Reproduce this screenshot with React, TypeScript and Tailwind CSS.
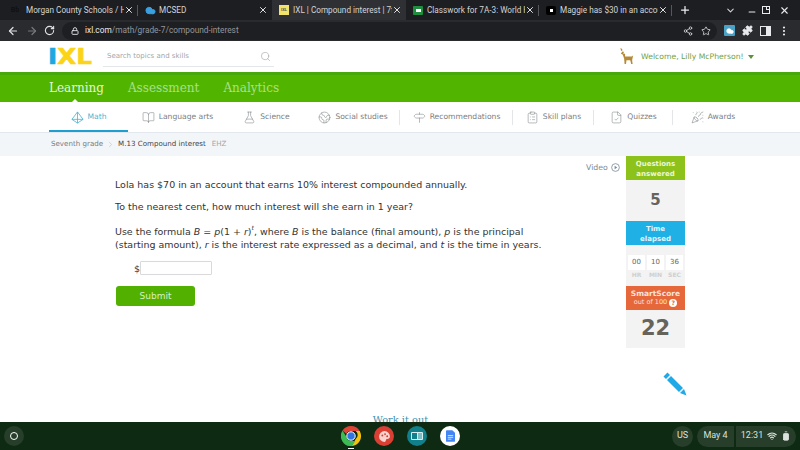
import React from "react";
import { ArrowLeft, ArrowRight, RotateCw, Lock, Share2, Star, Puzzle, EllipsisVertical, X, Plus, ChevronDown, Minus, Search, BookOpen, FlaskConical, Earth, Signpost, ClipboardList, PartyPopper, FileCheck, ChevronRight, Wifi, BatteryFull, Cloud } from "lucide-react";

const sans = "font-['Roboto','Noto_Sans',sans-serif]";
const verdana = "font-['DejaVu_Sans',sans-serif]";

function Tab({ w, icon, title, active, divider, textGap }: { w: string; icon: React.ReactNode; title: string; active?: boolean; divider?: boolean; textGap: string }) {
  return (
    <div className={`${w} relative flex h-full shrink-0 items-center pl-[5px] pr-[4px] ${active ? "bg-[#2f3033]" : ""}`}>
      <span className="flex w-[14px] shrink-0 justify-center">{icon}</span>
      <span className={`${textGap} min-w-0 flex-1 overflow-hidden whitespace-nowrap pr-[4px] text-[8.2px] leading-[12px] text-[#d3d4d6]`}>{title}</span>
      <X size={10} strokeWidth={2.4} className="shrink-0 text-[#dfe1e5]" />
      {divider && <span className="absolute right-0 top-[5px] h-[11px] w-px bg-[#55575b]" />}
    </div>
  );
}

function NavItem({ w, icon, label, active, divider }: { w: string; icon: React.ReactNode; label: string; active?: boolean; divider?: boolean }) {
  return (
    <div className={`${w} relative flex h-full shrink-0 items-center justify-center gap-[4px] text-[7.6px] ${active ? "text-[#4fb4d0]" : "text-[#7b8083]"}`}>
      {icon}
      <span>{label}</span>
      {active && <span className="absolute inset-x-0 bottom-0 h-[2px] bg-[#1f9fd0]" />}
      {divider && <span className="absolute right-0 top-[8px] h-[15px] w-px bg-[#e3e5e7]" />}
    </div>
  );
}

function TimeBox({ v, l }: { v: string; l: string }) {
  return (
    <div className="flex w-[17px] flex-col items-center">
      <div className="flex h-[15px] w-full items-center justify-center bg-white text-[7px] text-[#666]">{v}</div>
      <div className="mt-[1px] text-[6px] font-bold leading-[8px] text-[#cfcfcf]">{l}</div>
    </div>
  );
}

export default function App() {
  return (
    <div className="flex h-[450px] w-[800px] flex-col overflow-hidden bg-white">
      {/* tab strip */}
      <div className={`flex h-[20px] shrink-0 items-center bg-[#1d1e21] ${sans}`}>
        <Tab w="w-[138px]" textGap="ml-[7px]" title="Morgan County Schools / Hon" divider icon={<span className="pl-[6px] text-[7px] font-bold text-[#111]">Bb</span>} />
        <Tab w="w-[134px]" textGap="ml-[2px]" title="MCSED" icon={<Cloud size={11} fill="#3aa0e0" className="text-[#3aa0e0]" />} />
        <Tab w="w-[134px]" textGap="ml-[2px]" title="IXL | Compound interest | 7th" active icon={<span className="flex h-[10px] w-[10px] items-center justify-center bg-[#f3e36b] text-[4px] font-bold text-[#555]">IXL</span>} />
        <Tab w="w-[133px]" textGap="ml-[2px]" title="Classwork for 7A-3: World Hist" divider icon={<span className="flex h-[9px] w-[10px] items-center justify-center rounded-[1px] bg-[#1e8e3e]"><span className="h-[3px] w-[5px] bg-white" /></span>} />
        <Tab w="w-[133px]" textGap="ml-[2px]" title="Maggie has $30 in an account" divider icon={<span className="flex h-[9px] w-[10px] items-center justify-center rounded-[2px] bg-black"><span className="h-[3px] w-[3px] bg-white" /></span>} />
        <Plus size={12} strokeWidth={2.5} className="ml-[7px] text-[#eceef1]" />
        <ChevronDown size={11} strokeWidth={2.2} className="ml-[34px] text-[#d5d7da]" />
        <Minus size={10} strokeWidth={2.5} className="ml-[11px] mt-[3px] text-[#e8eaed]" />
        <span className="relative ml-[5px] h-[8px] w-[8px] border border-[#e8eaed]"><span className="absolute -right-[1px] -top-[1px] h-[4px] w-[4px] border border-[#e8eaed] bg-[#1d1e21]" /></span>
        <X size={11} strokeWidth={2.4} className="ml-[9px] text-[#e8eaed]" />
      </div>
      {/* toolbar */}
      <div className={`flex h-[21px] shrink-0 items-center bg-[#2a2b2e] pl-[7px] ${sans}`}>
        <ArrowLeft size={12} strokeWidth={2.4} className="text-[#e0e2e5]" />
        <ArrowRight size={12} strokeWidth={2.4} className="ml-[7px] text-[#77797d]" />
        <RotateCw size={11} strokeWidth={2.4} className="ml-[6px] text-[#e0e2e5]" />
        <div className="ml-[7px] flex h-[18px] w-[655px] items-center rounded-full bg-[#1e1f22] pl-[9px]">
          <Lock size={8} strokeWidth={3} className="text-[#d5d7da]" />
          <span className="ml-[6px] text-[8.3px] leading-none text-[#e8eaed]">ixl.com</span>
          <span className="text-[8.3px] leading-none text-[#93969b]">/math/grade-7/compound-interest</span>
          <Share2 size={10} strokeWidth={2} className="ml-auto text-[#d5d7da]" />
          <Star size={10} strokeWidth={2} className="ml-[8px] mr-[6px] text-[#d5d7da]" />
        </div>
        <span className="ml-[7px] flex h-[11px] w-[11px] items-center justify-center rounded-[1px] bg-[#4aa3c7]"><Cloud size={8} fill="#fff" className="text-white" /></span>
        <Puzzle size={11} fill="#e8eaed" className="ml-[7px] text-[#e8eaed]" />
        <span className="ml-[7px] flex h-[10px] w-[11px] justify-end border-[1.5px] border-[#e8eaed]"><span className="w-[4px] bg-[#e8eaed]" /></span>
        <EllipsisVertical size={12} strokeWidth={2.4} className="ml-[7px] text-[#e8eaed]" />
      </div>
      {/* IXL header */}
      <div className={`flex h-[31px] shrink-0 items-center bg-white pl-[48px] ${verdana}`}>
        <div className="flex w-[47px] origin-left scale-x-[1.12] items-baseline text-[22px] font-bold leading-none [-webkit-text-stroke:0.6px_currentColor]">
          <span className="text-[#1ea7e1]">I</span>
          <span className="text-[#fbd416]">XL</span>
        </div>
        <div className="ml-[8px] flex h-[21px] w-[171px] items-center border-b border-[#e4e7ea] pl-[4px] pr-[3px]">
          <span className="text-[7px] text-[#a3a6a8]">Search topics and skills</span>
          <Search size={11} strokeWidth={1.4} className="ml-auto text-[#a5a7a9]" />
        </div>
        <svg viewBox="0 0 16 18" className="ml-[344px] h-[17px] w-[16px]">
          <path d="M1 0 3 3 2 0 4 1 4 4 6 4 5 6 7 6 7 9H14L15.500 8 14.500 13 15 17H13.500L12.500 13H8.500L8 17H6.500L6 11 4.500 7 2.500 6 4 4Z" fill="#b5893a" />
        </svg>
        <span className="ml-[7px] text-[7.7px] text-[#6f9f45]">Welcome, Lilly McPherson!</span>
        <span className="ml-[4px] h-0 w-0 border-x-[3px] border-t-[4px] border-x-transparent border-t-[#5f8f3c]" />
      </div>
      {/* green bar */}
      <div className="flex h-[30px] shrink-0 items-center gap-[24px] border-t-[3px] border-[#46a80a] bg-[#51b500] pl-[49px] pb-[1px] font-['DejaVu_Serif',serif] text-[12px] text-[#a9e08a]">
        <div className="relative text-[#e6f5d8]">
          Learning
          <span className="absolute -bottom-[6px] left-[22px] h-0 w-0 border-x-[4px] border-b-[4px] border-x-transparent border-b-white" />
        </div>
        <div>Assessment</div>
        <div>Analytics</div>
      </div>
      {/* subnav */}
      <div className={`flex h-[30px] shrink-0 bg-white pl-[49px] ${verdana}`}>
        <NavItem w="w-[79px]" active label="Math" icon={<svg viewBox="0 0 14 14" className="h-[13px] w-[13px]" fill="none" stroke="#4fb4d0" strokeWidth="0.9"><path d="M7 1 1 9 7 13 13 9ZM7 1V13M1 9H13" /></svg>} />
        <NavItem w="w-[99px]" label="Language arts" icon={<BookOpen size={13} strokeWidth={1} />} />
        <NavItem w="w-[79px]" label="Science" icon={<FlaskConical size={13} strokeWidth={1} />} />
        <NavItem w="w-[94px]" divider label="Social studies" icon={<Earth size={13} strokeWidth={1} />} />
        <NavItem w="w-[113px]" divider label="Recommendations" icon={<Signpost size={13} strokeWidth={1} />} />
        <NavItem w="w-[81px]" divider label="Skill plans" icon={<ClipboardList size={13} strokeWidth={1} />} />
        <NavItem w="w-[79px]" divider label="Quizzes" icon={<FileCheck size={13} strokeWidth={1} />} />
        <NavItem w="w-[80px]" label="Awards" icon={<PartyPopper size={13} strokeWidth={1} />} />
      </div>
      {/* breadcrumb */}
      <div className={`flex h-[24px] shrink-0 items-center border-t border-[#e3e8ee] bg-[#f3f6f9] pl-[51px] text-[7.1px] ${verdana}`}>
        <span className="text-[#767b80]">Seventh grade</span>
        <ChevronRight size={9} strokeWidth={1} className="mx-[3px] text-[#9aa0a5]" />
        <span className="text-[#3e4347]">M.13 Compound interest</span>
        <span className="ml-[6px] text-[#a0a5a9]">EHZ</span>
      </div>
      {/* content */}
      <div className={`relative flex min-h-0 flex-1 flex-col overflow-hidden bg-white ${verdana}`}>
        <div className="flex h-[252px] shrink-0 pl-[115px]">
          <div className="w-[471px] pt-[22px] text-[9.47px] leading-[13px] text-[#333]">
            <p>Lola has $70 in an account that earns 10% interest compounded annually.</p>
            <p className="mt-[9px]">To the nearest cent, how much interest will she earn in 1 year?</p>
            <p className="mt-[12px]">
              Use the formula <i>B</i> = <i>p</i>(1 + <i>r</i>)<sup className="top-[-5px] text-[6px] leading-none"><i>t</i></sup>, where <i>B</i> is the balance (final amount), <i>p</i> is the principal
              <br />(starting amount), <i>r</i> is the interest rate expressed as a decimal, and <i>t</i> is the time in years.
            </p>
            <div className="mt-[10px] flex items-center pl-[19px]">
              <span>$</span>
              <div className="h-[14px] w-[72px] rounded-[1px] border border-[#d9d9d9] bg-white" />
            </div>
            <div className="ml-[1px] mt-[11px] flex h-[20px] w-[79px] items-center justify-center rounded-[3px] bg-[#51b000] text-[9px] text-[#d8f0c4]">Submit</div>
          </div>
          <div className="flex w-[40px] items-start pt-[6px] text-[7.8px] text-[#7c8b96]">
            <span>Video</span>
            <svg viewBox="0 0 10 10" className="ml-[3px] mt-[1px] h-[9px] w-[9px]" fill="none" stroke="#7c8b96"><circle cx="5" cy="5" r="4.3" strokeWidth="0.9" /><path d="M4 3 7 5 4 7Z" fill="#7c8b96" stroke="none" /></svg>
          </div>
          <div className="flex h-[192px] w-[59px] shrink-0 flex-col bg-[#f3f3f3] text-center">
            <div className="flex h-[24px] items-center justify-center bg-[#8cc21a] pt-[1px] text-[7px] font-bold leading-[10px] text-[#eef7d6]">Questions<br />answered</div>
            <div className="flex h-[41px] items-center justify-center text-[15px] font-bold text-[#66635c]">5</div>
            <div className="flex h-[24px] items-center justify-center bg-[#1fb0e6] pt-[1px] text-[7px] font-bold leading-[10px] text-[#e2f5fc]">Time<br />elapsed</div>
            <div className="flex h-[41px] justify-center gap-[2px] pt-[10px]">
              <TimeBox v="00" l="HR" />
              <TimeBox v="10" l="MIN" />
              <TimeBox v="36" l="SEC" />
            </div>
            <div className="flex h-[24px] flex-col items-center justify-center bg-[#e5673a] leading-[9px] text-[#fbe3da]">
              <span className="text-[7.5px] font-bold">SmartScore</span>
              <span className="flex items-center text-[6.5px]">out of 100<span className="ml-[2px] flex h-[8px] w-[8px] items-center justify-center rounded-full bg-white text-[6px] font-bold text-[#e5673a]">?</span></span>
            </div>
            <div className="flex h-[38px] items-center justify-center text-[21px] font-bold text-[#66635c]">22</div>
          </div>
        </div>
        <div className="mt-[5px] pl-[1px] text-center font-['DejaVu_Serif',serif] text-[9.800px] text-[#3d8fb0]">Work it out</div>
        <svg viewBox="0 0 24 24" className="absolute left-[663px] top-[216px] h-[24px] w-[24px]">
          <path d="M0.5 4.500 4.500 0.500 7 3 3 7Z M4 8 8 4 20 16 16 20Z M17 21 21 17 23.500 23.500Z" fill="#1fa9e6" />
        </svg>
      </div>
      {/* shelf */}
      <div className={`flex h-[28px] shrink-0 items-center bg-[#0e2a12] pl-[4px] pr-[4px] ${sans}`}>
        <span className="flex h-[20px] w-[20px] items-center justify-center rounded-full bg-[#263e2a]"><span className="h-[8px] w-[8px] rounded-full border border-white" /></span>
        <div className="ml-[317px] flex items-center gap-[13px]">
          <div className="relative">
            <svg viewBox="0 0 20 20" className="h-[20px] w-[20px]">
              <path d="M10 0a10 10 0 0 1 8.700 5H10a5 5 0 0 0-4.600 3L1.500 4.600A10 10 0 0 1 10 0Z" fill="#db4437" />
              <path d="M18.700 5a10 10 0 0 1-8 15l4-7a5 5 0 0 0 0-8Z" fill="#f4c20d" />
              <path d="M10.700 20A10 10 0 0 1 1.500 4.600l4 6.500a5 5 0 0 0 5 3.900h4Z" fill="#3cba54" />
              <circle cx="10" cy="10" r="4.200" fill="#2f74e0" stroke="#fff" strokeWidth="1" />
            </svg>
            <span className="absolute -bottom-[3px] left-[7px] h-[1px] w-[6px] bg-white" />
          </div>
          <span className="flex h-[20px] w-[20px] items-center justify-center rounded-full bg-[#d93f33]">
            <svg viewBox="0 0 12 12" className="h-[13px] w-[13px]"><path d="M6 1a5 5 0 0 0 0 10c1.500 0 1-1.500 1.500-2.200S11 8.500 11 6A5 5 0 0 0 6 1Z" fill="#f6d5d0" /><circle cx="4" cy="5" r="0.900" fill="#d93f33" /><circle cx="6.500" cy="3.800" r="0.900" fill="#d93f33" /><circle cx="8.500" cy="5.800" r="0.900" fill="#d93f33" /></svg>
          </span>
          <span className="flex h-[20px] w-[20px] items-center justify-center rounded-full bg-[#12808a]">
            <span className="flex h-[8px] w-[12px] items-center gap-[1px] rounded-[1px] bg-[#d8eef0] p-[1px]"><span className="h-full w-[5px] bg-[#12808a]" /><span className="h-full w-[4px] bg-[#7cbdc4]" /></span>
          </span>
          <span className="flex h-[20px] w-[20px] items-center justify-center rounded-full bg-white">
            <svg viewBox="0 0 10 13" className="h-[12px] w-[9px]"><path d="M1 0H7L10 3V12A1 1 0 0 1 9 13H1A1 1 0 0 1 0 12V1A1 1 0 0 1 1 0Z" fill="#4285f4" /><path d="M2 6H8M2 8H8M2 10H6" stroke="#fff" strokeWidth="0.800" /></svg>
          </span>
        </div>
        <div className="ml-auto flex items-center text-[9px] text-[#dbe2dc]">
          <span className="flex h-[21px] w-[21px] items-center justify-center rounded-full bg-[#263e2a]">US</span>
          <span className="ml-[4px] flex h-[21px] w-[37px] items-center justify-center rounded-l-full rounded-r-[3px] bg-[#263e2a]">May 4</span>
          <span className="ml-[2px] flex h-[21px] w-[60px] items-center justify-center gap-[4px] rounded-l-[3px] rounded-r-full bg-[#263e2a]">
            12:31
            <Wifi size={10} strokeWidth={3} />
            <BatteryFull size={10} fill="#dbe2dc" className="-rotate-90" />
          </span>
        </div>
      </div>
    </div>
  );
}
